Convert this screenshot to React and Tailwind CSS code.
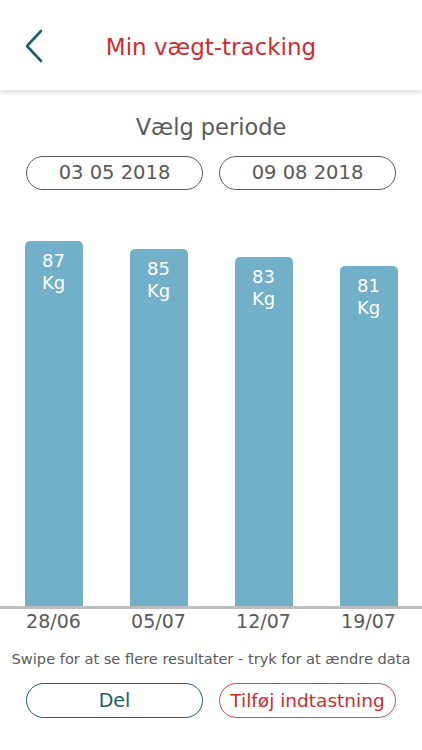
import React from "react";

const bars = [
    { value: 87, date: "28/06", h: 365 },
    { value: 85, date: "05/07", h: 357 },
    { value: 83, date: "12/07", h: 349 },
    { value: 81, date: "19/07", h: 340 },
];

export default function App() {
    return (
        <div
            className="w-[422px] h-[750px] bg-white overflow-hidden flex flex-col"
            style={{ fontFamily: '"DejaVu Sans", Verdana, sans-serif' }}
        >
            <header className="h-[90px] shrink-0 flex items-center relative shadow-[0_3px_5px_rgba(0,0,0,0.12)] z-10">
                <button className="absolute left-[22px] top-[27px] w-[24px] h-[38px] flex items-center justify-center">
                    <svg width="20" height="34" viewBox="0 0 20 34" fill="none">
                        <path
                            d="M17 2 L3 17 L17 32"
                            stroke="#1b5f6f"
                            strokeWidth="2.6"
                            strokeLinecap="round"
                            strokeLinejoin="round"
                        />
                    </svg>
                </button>
                <h1 className="w-full text-center text-[23px] text-[#d42a2a] pt-[4px]">
                    Min vægt-tracking
                </h1>
            </header>

            <section className="flex flex-col items-center pt-[23px]">
                <h2 className="text-[22.5px] text-[#5a5a5a] leading-[28px]">
                    Vælg periode
                </h2>
                <div className="grid grid-cols-2 gap-[16px] w-full px-[26px] mt-[15px]">
                    <button className="h-[34px] rounded-full border border-[#5a5a5a] text-[19.5px] text-[#5a5a5a]">
                        03 05 2018
                    </button>
                    <button className="h-[34px] rounded-full border border-[#5a5a5a] text-[19.5px] text-[#5a5a5a]">
                        09 08 2018
                    </button>
                </div>
            </section>

            <section className="mt-[51px]">
                <div className="grid grid-cols-4 px-[1px] h-[365px] items-end">
                    {bars.map((b) => (
                        <div key={b.date} className="flex justify-center h-full items-end">
                            <div
                                className="w-[58px] bg-[#72afc8] rounded-t-[5px] text-white text-[18px] leading-[22px] text-center pt-[9px]"
                                style={{ height: b.h }}
                            >
                                {b.value}
                                <br />
                                Kg
                            </div>
                        </div>
                    ))}
                </div>
                <div className="h-[3px] bg-[#bdbdbd]" />
                <div className="grid grid-cols-4 px-[1px]">
                    {bars.map((b) => (
                        <div
                            key={b.date}
                            className="text-center text-[19px] text-[#5a5a5a] leading-[24px]"
                        >
                            {b.date}
                        </div>
                    ))}
                </div>
            </section>

            <p className="text-center text-[14.6px] text-[#5a5a5a] mt-[15px]">
                Swipe for at se flere resultater - tryk for at ændre data
            </p>

            <div className="grid grid-cols-2 gap-[16px] px-[26px] mt-[13px]">
                <button className="h-[35px] rounded-full border-[1.5px] border-[#1b5f6f] text-[19px] text-[#1b5f6f]">
                    Del
                </button>
                <button className="h-[35px] rounded-full border-[1.5px] border-[#d9473a] text-[18.5px] text-[#d42a2a]">
                    Tilføj indtastning
                </button>
            </div>
        </div>
    );
}
